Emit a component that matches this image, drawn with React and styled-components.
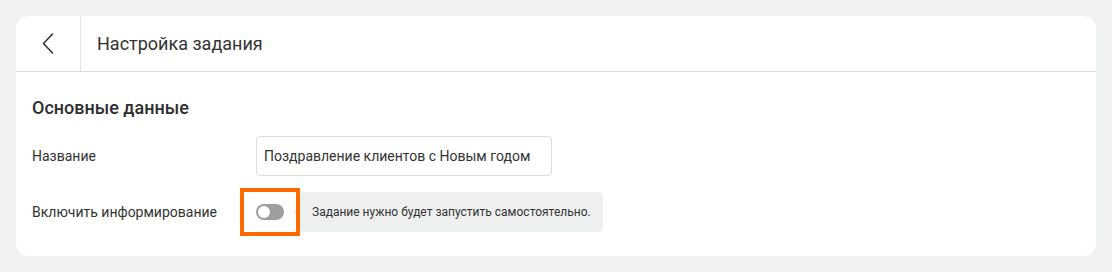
import React from "react";
import styled, { createGlobalStyle } from "styled-components";

const Global = createGlobalStyle`
  html, body { margin: 0; padding: 0; background: #f0f2f1; }
  body { font-family: Roboto, "Noto Sans", "Liberation Sans", sans-serif; color: #333; }
  * { box-sizing: border-box; }
`;

const Page = styled.div`
  padding: 16px;
  width: 1112px;
  height: 272px;
`;

const Card = styled.div`
  background: #fff;
  border-radius: 12px;
  height: 240px;
  overflow: hidden;
`;

const Header = styled.div`
  display: flex;
  align-items: stretch;
  height: 56px;
  border-bottom: 1px solid #dcdcdc;
`;

const BackButton = styled.button`
  width: 65px;
  border: none;
  border-right: 1px solid #e3e3e3;
  background: transparent;
  display: flex;
  align-items: center;
  justify-content: center;
  padding: 0;
  cursor: pointer;
`;

const Title = styled.h1`
  margin: 0;
  padding-left: 16px;
  display: flex;
  align-items: center;
  font-size: 18px;
  font-weight: 400;
  color: #333;
`;

const Body = styled.div`
  padding: 24px 16px;
`;

const SectionTitle = styled.h2`
  margin: 0 0 16px;
  font-size: 18px;
  line-height: 24px;
  font-weight: 500;
  color: #2e2e2e;
`;

const Rows = styled.div`
  display: flex;
  flex-direction: column;
  gap: 16px;
`;

const Row = styled.div`
  display: grid;
  grid-template-columns: 224px auto;
  align-items: center;
  height: 40px;
`;

const Label = styled.label`
  font-size: 14px;
  color: #333;
`;

const Controls = styled.div`
  display: flex;
  align-items: center;
`;

const Input = styled.input`
  width: 296px;
  height: 40px;
  border: 1px solid #dedede;
  border-radius: 4px;
  padding: 0 7px;
  font-family: inherit;
  font-size: 14px;
  color: #333;
  outline: none;
`;

const ToggleWrap = styled.div`
  position: relative;
  width: 44px;
  height: 40px;
  display: flex;
  align-items: center;
`;

const Track = styled.span`
  position: relative;
  width: 28px;
  height: 16px;
  border-radius: 8px;
  background: #9e9e9e;
  display: inline-block;
`;

const Knob = styled.span`
  position: absolute;
  top: 2px;
  left: ${(p) => (p.$on ? "14px" : "2px")};
  width: 12px;
  height: 12px;
  border-radius: 50%;
  background: #fff;
`;

const Highlight = styled.span`
  position: absolute;
  left: -16px;
  top: -4px;
  width: 60px;
  height: 48px;
  border: 4px solid #ff6a00;
  z-index: 2;
  pointer-events: none;
`;

const Hint = styled.div`
  position: relative;
  height: 40px;
  display: flex;
  align-items: center;
  padding: 0 12px;
  background: #eef0ef;
  border-radius: 4px;
  font-size: 12px;
  color: #333;
  &::before {
    content: "";
    position: absolute;
    left: -7px;
    top: 50%;
    margin-top: -6px;
    border-style: solid;
    border-width: 6px 7px 6px 0;
    border-color: transparent #eef0ef transparent transparent;
  }
`;

const Chevron = () => (
  <svg width="12" height="21" viewBox="0 0 12 21" fill="none">
    <path d="M10.5 1 L1.5 10.5 L10.5 20" stroke="#333" strokeWidth="1.6" strokeLinecap="round" strokeLinejoin="round" />
  </svg>
);

export default function App() {
  return (
    <>
      <Global />
      <Page>
        <Card>
          <Header>
            <BackButton aria-label="Назад">
              <Chevron />
            </BackButton>
            <Title>Настройка задания</Title>
          </Header>
          <Body>
            <SectionTitle>Основные данные</SectionTitle>
            <Rows>
              <Row>
                <Label>Название</Label>
                <Controls>
                  <Input defaultValue="Поздравление клиентов с Новым годом" />
                </Controls>
              </Row>
              <Row>
                <Label>Включить информирование</Label>
                <Controls>
                  <ToggleWrap>
                    <Track>
                      <Knob $on={false} />
                    </Track>
                    <Highlight />
                  </ToggleWrap>
                  <Hint>Задание нужно будет запустить самостоятельно.</Hint>
                </Controls>
              </Row>
            </Rows>
          </Body>
        </Card>
      </Page>
    </>
  );
}
